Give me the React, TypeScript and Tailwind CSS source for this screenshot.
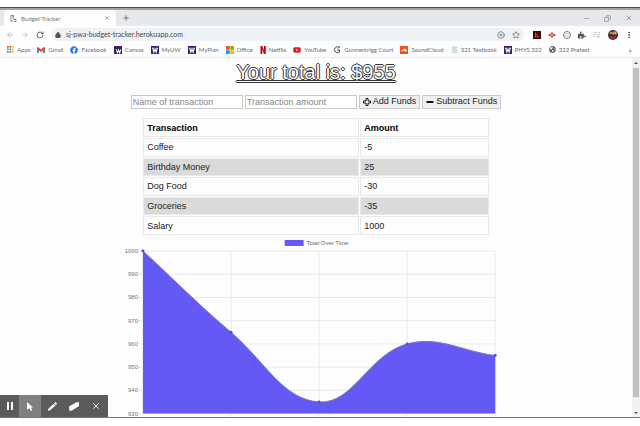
import type { ReactNode } from "react";
import { Lock, ArrowLeft, ArrowRight, RotateCw, Star, CirclePlus, X, Plus, Minus, Copy, EllipsisVertical, Landmark, Braces } from "lucide-react";
import { FaFacebook, FaYoutube, FaSoundcloud, FaPuzzlePiece, FaGlobeAmericas } from "react-icons/fa";

const transactions = [
  { name: "Coffee", amount: -5 },
  { name: "Birthday Money", amount: 25 },
  { name: "Dog Food", amount: -30 },
  { name: "Groceries", amount: -35 },
  { name: "Salary", amount: 1000 },
];

const WIcon = ({ low = false }: { low?: boolean }) => (
  <svg viewBox="0 0 14 14" className="size-[8px]">
    <rect width="14" height="14" fill="#39206b" />
    <path d={low ? "M4 6l2 6 2-5 2 5 2-6" : "M2 4h3M9 4h3M3 4l2 7 2-6 2 6 2-7"} fill="none" stroke="#fff" strokeWidth="1.8" />
  </svg>
);

const AppsIcon = () => (
  <svg viewBox="0 0 14 14" className="size-[7px]">
    {["#ea4335", "#ea4335", "#fbbc04", "#34a853", "#4285f4", "#fbbc04", "#34a853", "#4285f4", "#fbbc04"].map((c, i) => (
      <rect key={i} x={(i % 3) * 5} y={Math.floor(i / 3) * 5} width="3.4" height="3.4" fill={c} />
    ))}
  </svg>
);

const GmailIcon = () => (
  <svg viewBox="0 0 16 12" className="h-[6px] w-[8px]">
    <path d="M0 1v11h4V5z" fill="#4285f4" />
    <path d="M16 1v11h-4V5z" fill="#34a853" />
    <path d="M0 1l2-1 6 5 6-5 2 1v3l-8 6-8-6z" fill="#ea4335" />
  </svg>
);

const OfficeIcon = () => (
  <svg viewBox="0 0 16 16" className="size-[8px]">
    <path d="M0 0h7.5v7.5H0z" fill="#f25022" />
    <path d="M8.5 0H16v7.5H8.5z" fill="#7fba00" />
    <path d="M0 8.5h7.5V16H0z" fill="#00a4ef" />
    <path d="M8.5 8.5H16V16H8.5z" fill="#ffb900" />
  </svg>
);

const NetflixIcon = () => (
  <svg viewBox="0 0 12 16" className="h-[8px] w-[6px]">
    <path d="M1 0h3.5v16H1zM8 0h3.5v16H8z" fill="#a30a14" />
    <path d="M1 0h3.5l7 16H8z" fill="#e50914" />
  </svg>
);

const GunnerkriggIcon = () => (
  <svg viewBox="0 0 16 16" className="size-[8px]" fill="none" stroke="#45455a" strokeWidth="2">
    <path d="M13 3A6 6 0 1 0 13 12V8H8M14 1l-4 4" />
  </svg>
);

const bookmarks: { label: string; icon: ReactNode }[] = [
  { label: "Apps", icon: <AppsIcon /> },
  { label: "Gmail", icon: <GmailIcon /> },
  { label: "Facebook", icon: <FaFacebook className="size-[8px] text-[#1877f2]" /> },
  { label: "Canvas", icon: <WIcon low /> },
  { label: "MyUW", icon: <WIcon /> },
  { label: "MyPlan", icon: <WIcon /> },
  { label: "Office", icon: <OfficeIcon /> },
  { label: "Netflix", icon: <NetflixIcon /> },
  { label: "YouTube", icon: <FaYoutube className="size-[8px] text-[#e01b22]" /> },
  { label: "Gunnerkrigg Court", icon: <GunnerkriggIcon /> },
  { label: "SoundCloud", icon: <FaSoundcloud className="size-[8px] bg-[#f4511e] p-px text-white" /> },
  { label: "321 Textbook", icon: <Landmark className="size-[7px] text-[#8fb4c8]" /> },
  { label: "PHYS 322", icon: <WIcon /> },
  { label: "322 Pretest", icon: <FaGlobeAmericas className="size-[7px] text-[#55585c]" /> },
];

function TabStrip() {
  return (
    <div className="flex h-4 items-stretch bg-[#e7e8ec] pl-1">
      <div className="flex w-28 items-center rounded-t bg-[#fdfdfd] pr-1.5 pl-1.5">
        <svg viewBox="0 0 14 14" className="size-[7px]" fill="none" stroke="#666" strokeWidth="1.5">
          <path d="M2 1h5v4M2 1v11h4M4 4h3M9 6l-2 3h5v4H8" />
        </svg>
        <span className="ml-[4px] flex-1 text-[6px] text-[#75787c]">Budget Tracker</span>
        <button aria-label="Close tab"><X className="size-[6px] text-[#5f6368]" /></button>
      </div>
      <button aria-label="New tab" className="ml-1.5"><Plus className="size-2 text-[#4b4e52]" /></button>
      <div className="ml-auto flex items-center gap-[14px] pr-[7px] text-[#77797c]">
        <button aria-label="Minimize"><Minus className="size-[7px]" /></button>
        <button aria-label="Restore"><Copy className="size-[7px] -scale-x-100" /></button>
        <button aria-label="Close window"><X className="size-[8px]" /></button>
      </div>
    </div>
  );
}

function AddressBar() {
  return (
    <div className="flex h-[17px] items-center bg-[#fdfdfd] pr-[7px] pl-[6px]">
      <div className="flex items-center gap-[7px]">
        <button aria-label="Back"><ArrowLeft className="size-[8px] text-[#9a9da0]" /></button>
        <button aria-label="Forward"><ArrowRight className="size-[8px] text-[#b4b6b9]" /></button>
        <button aria-label="Reload"><RotateCw className="size-[8px] text-[#505357]" strokeWidth={2.5} /></button>
      </div>
      <div className="ml-[7px] flex h-[13px] flex-1 items-center rounded-full bg-[#eff2f4] pr-1 pl-1">
        <Lock className="size-[6px] fill-[#4b4e52] text-[#4b4e52]" strokeWidth={3} />
        <input
          aria-label="Address"
          readOnly
          value="sj-pwa-budget-tracker.herokuapp.com"
          className="ml-[5px] min-w-0 flex-1 bg-transparent text-[7px] text-[#45484c] outline-none"
        />
        <CirclePlus className="size-[8px] text-[#606366]" />
        <Star className="ml-[7px] size-[8px] text-[#505357]" />
      </div>
      <div className="ml-[9px] flex items-center gap-[7px]">
        <svg viewBox="0 0 16 16" className="size-[8px]">
          <rect width="16" height="16" fill="#3a0808" />
          <path d="M5 3v9H3M8 5v7h5" fill="none" stroke="#e05050" strokeWidth="1.8" />
        </svg>
        <svg viewBox="0 0 16 16" className="size-[8px]" fill="#dd3340">
          <path d="M6 3h4v3h3l3 2-3 2h-3v3H6v-3H3L0 8l3-2h3z" />
          <path d="M6 7h4v2H6z" fill="#fff" />
        </svg>
        <span className="flex size-[8px] items-center justify-center rounded-full border border-[#77797c]"><Braces className="size-[4px] text-[#77797c]" /></span>
        <FaPuzzlePiece className="size-[8px] text-[#505357]" />
        <svg viewBox="0 0 16 16" className="size-[8px]" fill="none" stroke="#bfc1c4" strokeWidth="1.6">
          <path d="M1 3h8M1 7h8M1 11h5M15 3h-3v8" />
          <circle cx="10.5" cy="12" r="1.6" />
        </svg>
        <svg viewBox="0 0 20 20" className="size-[10px]">
          <circle cx="10" cy="10" r="10" fill="#4b2a35" />
          <path d="M2 8l4-5 3 3 5-4 4 5-3 3-2-3-3 3-3-3z" fill="#e0b040" />
          <path d="M3 13l5-1 3 2 4-3 2 2-4 5-6 1z" fill="#8b3348" />
          <circle cx="7" cy="10" r="2" fill="#302a4e" />
          <circle cx="13" cy="10" r="2" fill="#6b2735" />
        </svg>
        <button aria-label="Menu"><EllipsisVertical className="size-[8px] text-[#44474a]" strokeWidth={3} /></button>
      </div>
    </div>
  );
}

function BookmarksBar() {
  return (
    <nav aria-label="Bookmarks" className="flex h-[15px] items-center gap-[7px] border-b border-[#ececee] bg-[#fdfdfd] pr-2 pb-px pl-[7px] text-[6px] whitespace-nowrap text-[#6b6e72]">
      {bookmarks.map((b) => (
        <a key={b.label} href="#" className="flex items-center gap-[3px]">
          {b.icon}
          {b.label}
        </a>
      ))}
      <button aria-label="More bookmarks" className="ml-auto text-[8px] leading-none">»</button>
    </nav>
  );
}

const field = "h-[14px] w-28 border border-[#c9c9c9] bg-white px-px placeholder:text-[#858585]";
const action = "flex h-[14px] items-center gap-[2px] border border-[#cacaca] bg-[#efefef] px-[3px] text-[#222]";

function TransactionForm() {
  return (
    <form className="mt-[11px] flex justify-center gap-[2px] text-[9px]" onSubmit={(e) => e.preventDefault()}>
      <input className={field} placeholder="Name of transaction" aria-label="Name of transaction" />
      <input className={field} placeholder="Transaction amount" aria-label="Transaction amount" />
      <button className={action}>
        <svg viewBox="0 0 16 16" className="size-[8px]" fill="#fff" stroke="#111" strokeWidth="2">
          <path d="M6 1h4v5h5v4h-5v5H6v-5H1V6h5z" />
        </svg>
        Add Funds
      </button>
      <button className={action}>
        <svg viewBox="0 0 16 16" className="size-[8px]"><path d="M1 6h14v4H1z" fill="#111" /></svg>
        Subtract Funds
      </button>
    </form>
  );
}

const cell = "border border-[#e9e9e9] px-[3px] py-0 text-left";

function TransactionTable() {
  return (
    <table className="mx-auto mt-2 h-[119px] w-[55%] table-fixed border-separate border-spacing-px text-[9px] leading-[12px] text-[#222]">
      <thead>
        <tr className="h-[19px]">
          <th className={`${cell} w-[216px] font-bold text-black`}>Transaction</th>
          <th className={`${cell} font-bold text-black`}>Amount</th>
        </tr>
      </thead>
      <tbody>
        {transactions.map((t) => (
          <tr key={t.name} className="even:bg-[#dadada]">
            <td className={cell}>{t.name}</td>
            <td className={cell}>{t.amount}</td>
          </tr>
        ))}
      </tbody>
    </table>
  );
}

const plot = { left: 17, right: 370, top: 15, bottom: 178 };
const totals = [1000, 965, 935, 960, 955];
const ticks = [1000, 990, 980, 970, 960, 950, 940, 930];
const xAt = (i: number) => plot.left + (i * (plot.right - plot.left)) / (totals.length - 1);
const yAt = (v: number) => plot.top + ((1000 - v) * (plot.bottom - plot.top)) / 70;

// Smooth curve through the points; handle lengths depend on the distance to each neighbour.
function curve(tension: number) {
  const pts = totals.map((v, i) => ({ x: xAt(i), y: yAt(v) }));
  const handles = pts.map((p, i) => {
    const a = pts[i - 1] ?? p;
    const b = pts[i + 1] ?? p;
    const da = Math.hypot(p.x - a.x, p.y - a.y);
    const db = Math.hypot(b.x - p.x, b.y - p.y);
    const fa = (tension * da) / (da + db);
    const fb = (tension * db) / (da + db);
    return {
      px: p.x - fa * (b.x - a.x),
      py: p.y - fa * (b.y - a.y),
      nx: p.x + fb * (b.x - a.x),
      ny: p.y + fb * (b.y - a.y),
    };
  });
  return pts
    .map((p, i) =>
      i === 0
        ? `M${p.x} ${p.y}`
        : `C${handles[i - 1].nx} ${handles[i - 1].ny} ${handles[i].px} ${handles[i].py} ${p.x} ${p.y}`,
    )
    .join("");
}

function Chart() {
  const line = curve(0.4);
  return (
    <svg viewBox="0 0 380 190" className="mx-auto block w-[60%] overflow-visible text-[6px]" role="img" aria-label="Total Over Time">
      <rect x="159" y="4" width="19" height="6" fill="#6559f5" />
      <text x="181" y="9" fill="#666">Total Over Time</text>
      <g stroke="#e9e9e9" strokeWidth="1">
        {ticks.map((t) => <path key={t} d={`M${plot.left - 5} ${yAt(t)}H${plot.right}`} />)}
        {totals.map((_, i) => <path key={i} d={`M${xAt(i)} ${plot.top}V${plot.bottom + 5}`} />)}
      </g>
      {ticks.map((t) => (
        <text key={t} x={plot.left - 5} y={yAt(t) + 2} textAnchor="end" fill="#777">{t}</text>
      ))}
      <path d={`${line}V${plot.bottom}H${plot.left}Z`} fill="#6559f5" />
      <path d={line} fill="none" stroke="#7a76b8" strokeWidth="1" />
      {totals.map((t, i) => <circle key={i} cx={xAt(i)} cy={yAt(t)} r="1.5" fill="#5548dd" />)}
    </svg>
  );
}

function Scrollbar() {
  return (
    <div className="flex w-2 flex-col items-center bg-[#f0f0f0]">
      <svg viewBox="0 0 8 10" className="h-[10px] w-2"><path d="M2 6l2-2 2 2z" fill="#555" /></svg>
      <div className="w-[6px] flex-1 bg-[#c1c1c1]" />
      <div className="h-[10px]" />
      <svg viewBox="0 0 8 10" className="h-[10px] w-2"><path d="M2 5l2 2 2-2z" fill="#555" /></svg>
    </div>
  );
}

function RecorderControls() {
  const item = "flex w-[22px] items-center justify-center";
  return (
    <div className="absolute bottom-0 left-0 flex h-[22px] bg-[#5b5b5b] pr-px text-white">
      <button aria-label="Pause" className="flex w-[19px] items-center justify-center">
        <svg viewBox="0 0 6 8" className="h-[8px] w-[6px]" fill="#fff"><path d="M0 0h2v8H0zM4 0h2v8H4z" /></svg>
      </button>
      <button aria-label="Pointer" className={`${item} bg-[#808080]`}>
        <svg viewBox="0 0 12 18" className="h-[9px] w-[6px]" fill="#fff"><path d="M0 0l12 11H8l2.5 5.5L7.5 18 5 12.5 0 15z" /></svg>
      </button>
      <button aria-label="Pen" className={item}>
        <svg viewBox="0 0 18 18" className="size-[9px]" fill="#fff"><path d="M0 18l1-5L11 4l4 3L5 16zM12 3l3-3 3 3-2 3z" /></svg>
      </button>
      <button aria-label="Eraser" className={item}>
        <svg viewBox="0 0 20 18" className="h-[9px] w-[10px]" fill="#fff"><path d="M0 9L14 1l6-1v8L6 17l-5 1z" /></svg>
      </button>
      <button aria-label="Close" className={item}><X className="size-[10px]" /></button>
    </div>
  );
}

export default function App() {
  return (
    <div className="flex h-screen flex-col bg-white pt-[7px] pb-[8px] font-[Lato,'Noto_Sans',sans-serif]">
      <header className="border-t border-[#4a4a4a]">
        <div className="h-[2px] bg-[#a4a4a4]" />
        <TabStrip />
        <AddressBar />
        <BookmarksBar />
      </header>
      <div className="relative flex min-h-0 flex-1 border-b border-[#777] bg-[#fdfdfd] font-['Liberation_Sans',Arial,sans-serif]">
        <main className="flex-1 overflow-hidden pt-[2px]">
          <h1 className="text-center text-[20px] leading-6 text-white underline decoration-white decoration-1 underline-offset-2 [text-shadow:-1px_0_#333,1px_0_#333,0_-1px_#333,0_1px_#333]">
            Your total is: $955
          </h1>
          <TransactionForm />
          <TransactionTable />
          <Chart />
        </main>
        <Scrollbar />
        <RecorderControls />
      </div>
    </div>
  );
}
